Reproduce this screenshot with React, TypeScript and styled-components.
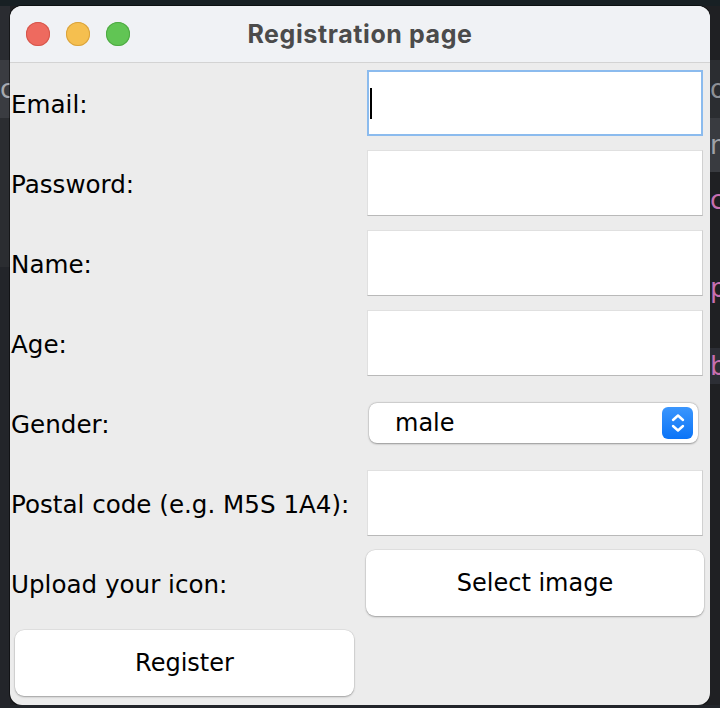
import React from 'react';
import styled, { createGlobalStyle } from 'styled-components';

const GlobalStyle = createGlobalStyle`
  html, body {
    margin: 0;
    padding: 0;
    background: #1f2023;
  }
  * {
    box-sizing: border-box;
  }
`;

const Desktop = styled.div`
  width: 720px;
  height: 708px;
  display: grid;
  grid-template-columns: 10px 700px 10px;
  grid-template-rows: 6px 699px 3px;
  background: #1f2023;
  overflow: hidden;
  font-family: 'DejaVu Sans', 'Liberation Sans', sans-serif;
`;

const TopStrip = styled.div`
  grid-column: 1 / 4;
  background: #182024;
`;

const SideStrip = styled.div`
  display: flex;
  flex-direction: column;
  overflow: hidden;
`;

// bits of the editor window that peek out behind the dialog
const SideBand = styled.div<{ $h: number; $bg: string; $color?: string }>`
  height: ${(p) => p.$h}px;
  flex-shrink: 0;
  background: ${(p) => p.$bg};
  color: ${(p) => p.$color || '#9a9ca2'};
  font-size: 26px;
  line-height: ${(p) => p.$h}px;
  white-space: nowrap;
  overflow: hidden;
`;

const BottomStrip = styled.div`
  grid-column: 1 / 4;
  background: #22252a;
`;

const Window = styled.div`
  display: flex;
  flex-direction: column;
  background: #ececec;
  border-radius: 12px;
  overflow: hidden;
  box-shadow: 0 0 0 1px rgba(0, 0, 0, 0.5);
`;

const TitleBar = styled.div`
  height: 57px;
  flex-shrink: 0;
  display: flex;
  align-items: center;
  position: relative;
  background: #f0f2f5;
  border-bottom: 1px solid #d3d3d3;
`;

const Lights = styled.div`
  display: flex;
  gap: 16px;
  padding-left: 16px;
`;

const Light = styled.span<{ $color: string; $edge: string }>`
  width: 24px;
  height: 24px;
  border-radius: 50%;
  background: ${(p) => p.$color};
  box-shadow: inset 0 0 0 1px ${(p) => p.$edge};
`;

const Title = styled.div`
  position: absolute;
  left: 0;
  right: 0;
  text-align: center;
  font-family: Inter, 'DejaVu Sans', sans-serif;
  font-weight: 700;
  font-size: 25px;
  letter-spacing: 0.6px;
  color: #4b4b4b;
  pointer-events: none;
`;

const Form = styled.div`
  display: grid;
  grid-template-columns: 350px 350px;
  grid-auto-rows: 80px;
`;

const Label = styled.div`
  display: flex;
  align-items: center;
  padding: 3px 0 0 1px;
  font-size: 24.6px;
  color: #000;
  white-space: nowrap;
`;

const FieldCell = styled.div`
  padding: 7px;
  display: flex;
`;

const TextField = styled.div<{ $focused?: boolean }>`
  flex: 1;
  background: #fff;
  border: ${(p) => (p.$focused ? '2px solid #8bbbee' : '1px solid #e0e0e0')};
  border-bottom-color: ${(p) => (p.$focused ? '#8bbbee' : '#b9b9b9')};
  border-right-color: ${(p) => (p.$focused ? '#8bbbee' : '#d0d0d0')};
  display: flex;
  align-items: center;
  padding-left: 1px;
`;

const Caret = styled.span`
  width: 2px;
  height: 31px;
  background: #000;
`;

const ComboCell = styled.div`
  display: flex;
  align-items: center;
  padding: 0 12px 0 9px;
`;

const Combo = styled.div`
  flex: 1;
  height: 40px;
  background: #fff;
  border-radius: 8px;
  box-shadow: 0 0.5px 2px rgba(0, 0, 0, 0.35), 0 0 0 0.5px rgba(0, 0, 0, 0.08);
  display: flex;
  align-items: center;
  justify-content: space-between;
  padding: 0 5px 0 26px;
  font-size: 24px;
  color: #000;
`;

const Stepper = styled.div`
  width: 31px;
  height: 32px;
  border-radius: 6px;
  background: linear-gradient(#3b96fd, #0b74f7);
  display: flex;
  align-items: center;
  justify-content: center;
`;

const ButtonCell = styled.div<{ $left: number; $right: number }>`
  padding: 7px ${(p) => p.$right}px 7px ${(p) => p.$left}px;
  display: flex;
`;

const Button = styled.div`
  flex: 1;
  background: #fff;
  border-radius: 9px;
  box-shadow: 0 1px 2px rgba(0, 0, 0, 0.3), 0 0 0 0.5px rgba(0, 0, 0, 0.08);
  display: flex;
  align-items: center;
  justify-content: center;
  font-size: 24px;
  color: #000;
`;

const textRows = ['Email:', 'Password:', 'Name:', 'Age:'];

export default function App() {
  return (
    <>
      <GlobalStyle />
      <Desktop>
        <TopStrip />
        <SideStrip>
          <SideBand $h={54} $bg="#2a2c31" />
          <SideBand $h={58} $bg="#3a3c41" $color="#a8aab0">c</SideBand>
          <SideBand $h={149} $bg="#2b2d31" />
          <SideBand $h={438} $bg="#23252a" />
        </SideStrip>
        <Window>
          <TitleBar>
            <Lights>
              <Light $color="#ee6a5f" $edge="#d5574c" />
              <Light $color="#f5bf4f" $edge="#d9a33d" />
              <Light $color="#61c554" $edge="#4fa944" />
            </Lights>
            <Title>Registration page</Title>
          </TitleBar>
          <Form>
            {textRows.map((label, i) => (
              <React.Fragment key={label}>
                <Label>{label}</Label>
                <FieldCell>
                  <TextField $focused={i === 0}>{i === 0 && <Caret />}</TextField>
                </FieldCell>
              </React.Fragment>
            ))}
            <Label>Gender:</Label>
            <ComboCell>
              <Combo>
                <span>male</span>
                <Stepper>
                  <svg width="18" height="24" viewBox="0 0 18 24" fill="none">
                    <path d="M4 9 L9 4.5 L14 9" stroke="#fff" strokeWidth="2.4" strokeLinecap="round" strokeLinejoin="round" />
                    <path d="M4 15 L9 19.5 L14 15" stroke="#fff" strokeWidth="2.4" strokeLinecap="round" strokeLinejoin="round" />
                  </svg>
                </Stepper>
              </Combo>
            </ComboCell>
            <Label>Postal code (e.g. M5S 1A4):</Label>
            <FieldCell>
              <TextField />
            </FieldCell>
            <Label>Upload your icon:</Label>
            <ButtonCell $left={6} $right={6}>
              <Button>Select image</Button>
            </ButtonCell>
            <ButtonCell $left={5} $right={6}>
              <Button>Register</Button>
            </ButtonCell>
          </Form>
        </Window>
        <SideStrip>
          <SideBand $h={54} $bg="#1f2023" />
          <SideBand $h={58} $bg="#2b2d31" $color="#8e9096">on</SideBand>
          <SideBand $h={54} $bg="#393b40" $color="#a0a2a8">m</SideBand>
          <SideBand $h={56} $bg="#1f2023" $color="#c86fb0">c</SideBand>
          <SideBand $h={120} $bg="#1f2023" $color="#c86fb0">p</SideBand>
          <SideBand $h={36} $bg="#2c2e35" $color="#c86fb0">b</SideBand>
          <SideBand $h={321} $bg="#1f2023" />
        </SideStrip>
        <BottomStrip />
      </Desktop>
    </>
  );
}
